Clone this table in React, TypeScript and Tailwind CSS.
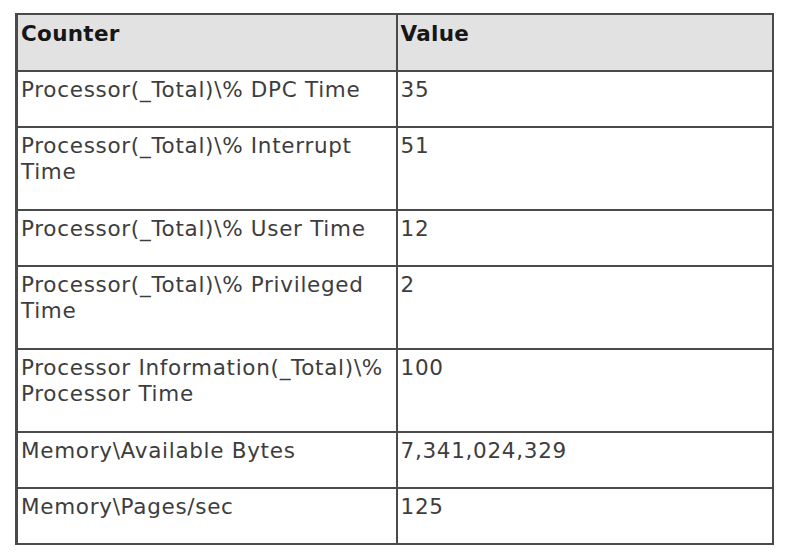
const rows: { counter: string; value: string; tall?: boolean }[] = [
  { counter: "Processor(_Total)\\% DPC Time", value: "35" },
  { counter: "Processor(_Total)\\% Interrupt Time", value: "51", tall: true },
  { counter: "Processor(_Total)\\% User Time", value: "12" },
  { counter: "Processor(_Total)\\% Privileged Time", value: "2", tall: true },
  { counter: "Processor Information(_Total)\\% Processor Time", value: "100", tall: true },
  { counter: "Memory\\Available Bytes", value: "7,341,024,329" },
  { counter: "Memory\\Pages/sec", value: "125" },
];

export default function App() {
  return (
    <div className="w-[792px] h-[558px] bg-white pt-[13px] pl-[15px] font-['DejaVu_Sans',Verdana,sans-serif]">
      <table className="w-[759px] border-collapse border-[2px] border-l-[3px] border-[#4a4a4a] text-[21.5px] leading-[26px] tracking-[0.7px] text-[#3d3d3d]">
        <thead>
          <tr className="h-[57px] bg-[#e2e2e2]">
            <th className="w-[380px] border-2 border-[#4a4a4a] px-[3px] pt-[6px] align-top text-left font-bold tracking-[0.3px] text-[#161616]">
              Counter
            </th>
            <th className="border-2 border-[#4a4a4a] px-[3px] pt-[6px] align-top text-left font-bold tracking-[0.3px] text-[#161616]">
              Value
            </th>
          </tr>
        </thead>
        <tbody>
          {rows.map((r) => (
            <tr key={r.counter} className={r.tall ? "h-[83px]" : "h-[56px]"}>
              <td className="border-2 border-[#4a4a4a] px-[3px] pt-[5px] align-top">{r.counter}</td>
              <td className="border-2 border-[#4a4a4a] px-[3px] pt-[5px] align-top">{r.value}</td>
            </tr>
          ))}
        </tbody>
      </table>
    </div>
  );
}
